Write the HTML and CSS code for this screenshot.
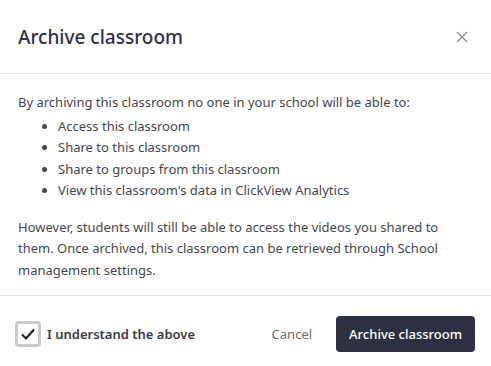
FILE: index.html
```html
<!DOCTYPE html>
<html lang="en">
<head>
  <meta charset="UTF-8">
  <title>Archive classroom</title>
  <link rel="stylesheet" href="styles.css">
</head>
<body>

<div class="modal">
  <div class="modal-header">
    <h2>Archive classroom</h2>
    <button class="close" aria-label="Close">
      <svg width="12" height="12" viewBox="0 0 12 12"><path d="M1 1L11 11M11 1L1 11" stroke="#8a8b90" stroke-width="1.3" fill="none"/></svg>
    </button>
  </div>

  <div class="modal-body">
    <p>By archiving this classroom no one in your school will be able to:</p>
    <ul>
      <li>Access this classroom</li>
      <li>Share to this classroom</li>
      <li>Share to groups from this classroom</li>
      <li>View this classroom's data in ClickView Analytics</li>
    </ul>
    <p class="note">However, students will still be able to access the videos you shared to them. Once archived, this classroom can be retrieved through School management settings.</p>
  </div>

  <div class="modal-footer">
    <label class="confirm">
      <span class="checkbox">
        <svg width="16" height="14" viewBox="0 0 16 14"><path d="M2 7.5L6 11.5L14 2.5" stroke="#222" stroke-width="2.2" fill="none"/></svg>
      </span>
      I understand the above
    </label>
    <div class="actions">
      <button class="cancel">Cancel</button>
      <button class="primary">Archive classroom</button>
    </div>
  </div>
</div>

</body>
</html>
```

FILE: styles.css
```css
body {
  margin: 0;
  font-family: "Noto Sans", "Open Sans", sans-serif;
  background: #fff;
  color: #46474d;
}
.modal {
  width: 491px;
}
.modal-header {
  height: 74px;
  box-sizing: border-box;
  display: flex;
  align-items: center;
  justify-content: space-between;
  padding: 0 23px 0 18px;
  border-bottom: 1px solid #e6e6e6;
}
.modal-header h2 {
  margin: 0;
  font-size: 19px;
  font-weight: 500;
  color: #2f3140;
}
.close {
  border: none;
  background: none;
  padding: 0;
  width: 12px;
  height: 12px;
  cursor: pointer;
  display: flex;
}
.modal-body {
  padding: 18px 18px 14px;
  font-size: 13px;
  line-height: 21.5px;
}
.modal-body p {
  margin: 0;
}
.modal-body ul {
  margin: 2px 0 15px;
  padding-left: 40px;
}
.modal-footer {
  border-top: 1px solid #e6e6e6;
  display: flex;
  align-items: center;
  justify-content: space-between;
  padding: 20px 16px 20px 15px;
}
.confirm {
  display: flex;
  align-items: center;
  gap: 6px;
  font-size: 13px;
  font-weight: 600;
  color: #3a3b44;
}
.checkbox {
  width: 20px;
  height: 20px;
  border: 3px solid #c9c9c9;
  border-radius: 4px;
  display: flex;
  align-items: center;
  justify-content: center;
}
.actions {
  display: flex;
  align-items: center;
  gap: 24px;
}
.actions button {
  font-family: inherit;
  font-size: 13px;
  border: none;
  cursor: pointer;
}
.cancel {
  background: none;
  color: #6c6d72;
  padding: 0;
}
.primary {
  background: #2e3141;
  color: #fff;
  font-weight: 500;
  height: 36px;
  padding: 0 13px;
  border-radius: 4px;
}
```
